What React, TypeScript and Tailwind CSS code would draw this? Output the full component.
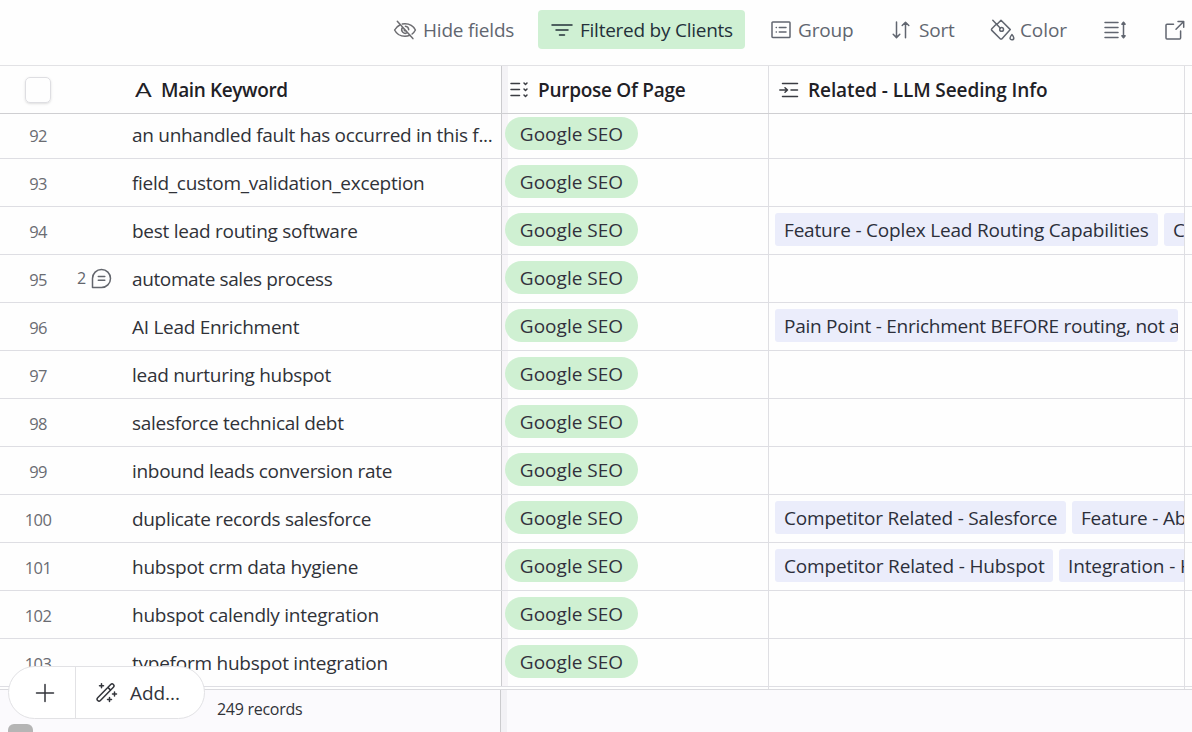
import * as React from 'react';
import { clsx } from 'clsx';

interface KeywordRow {
  id: number;
  keyword: string;
  tracking: string;
  comments?: number;
  related?: { label: string; className: string }[];
}

const rows: KeywordRow[] = [
  { id: 92, keyword: 'an unhandled fault has occurred in this f...', tracking: 'tracking-[-0.29px]' },
  { id: 93, keyword: 'field_custom_validation_exception', tracking: 'tracking-[-0.29px]' },
  {
    id: 94,
    keyword: 'best lead routing software',
    tracking: 'tracking-[-0.26px]',
    related: [
      { label: 'Feature - Coplex Lead Routing Capabilities', className: 'w-[383px] tracking-[-0.18px]' },
      { label: 'C', className: 'w-[27px]' },
    ],
  },
  { id: 95, keyword: 'automate sales process', tracking: 'tracking-[-0.38px]', comments: 2 },
  {
    id: 96,
    keyword: 'AI Lead Enrichment',
    tracking: 'tracking-[-0.28px]',
    related: [
      { label: 'Pain Point - Enrichment BEFORE routing, not a', className: 'w-[403px] tracking-[-0.25px]' },
    ],
  },
  { id: 97, keyword: 'lead nurturing hubspot', tracking: 'tracking-[-0.29px]' },
  { id: 98, keyword: 'salesforce technical debt', tracking: 'tracking-[-0.3px]' },
  { id: 99, keyword: 'inbound leads conversion rate', tracking: 'tracking-[-0.3px]' },
  {
    id: 100,
    keyword: 'duplicate records salesforce',
    tracking: 'tracking-[-0.33px]',
    related: [
      { label: 'Competitor Related - Salesforce', className: 'w-[291px] tracking-[-0.2px]' },
      { label: 'Feature - Ab', className: 'w-[130px] tracking-[-0.2px]' },
    ],
  },
  {
    id: 101,
    keyword: 'hubspot crm data hygiene',
    tracking: 'tracking-[-0.24px]',
    related: [
      { label: 'Competitor Related - Hubspot', className: 'w-[278px] tracking-[-0.15px]' },
      { label: 'Integration - H', className: 'w-[150px] tracking-[-0.12px]' },
    ],
  },
  { id: 102, keyword: 'hubspot calendly integration', tracking: 'tracking-[-0.24px]' },
  { id: 103, keyword: 'typeform hubspot integration', tracking: 'tracking-[-0.24px]' },
];

interface IconProps {
  width: number;
  height: number;
  className?: string;
  children: React.ReactNode;
}

function Icon({ width, height, className, children }: IconProps) {
  return (
    <svg
      width={width}
      height={height}
      viewBox={`0 0 ${width} ${height}`}
      fill="none"
      stroke="currentColor"
      strokeWidth="1.5"
      strokeLinecap="round"
      strokeLinejoin="round"
      className={clsx('shrink-0', className)}
      aria-hidden
    >
      {children}
    </svg>
  );
}

function Toolbar() {
  return (
    <div className="flex h-[66px] shrink-0 items-start border-b border-[#e2e2e5] pt-2.5 pl-[393px] text-[#616670]">
      <button type="button" className="flex h-10 w-[145px] items-center">
        <Icon width={24} height={20} className="mr-1.5 text-[#6c6c70]">
          <path d="M6.800 5C4.400 6.200 2.700 8 1.600 10c2 4 5.700 6.300 10.400 6.300 1.800 0 3.400-.4 4.900-1M9.300 3.900c.9-.1 1.800-.2 2.700-.2 4.700 0 8.400 2.300 10.400 6.300-.8 1.600-1.900 2.900-3.300 4" />
          <path d="M9.300 7.600a3.700 3.700 0 0 0 5.100 5.100M12.400 6.300a3.700 3.700 0 0 1 3.300 3.500M4.300 1.200l15.600 17.400" />
          <path d="M11.300 9.600a1 1 0 0 0 1.300 1.200" />
        </Icon>
        <span className="tracking-[-0.2px]">Hide fields</span>
      </button>
      <button type="button" className="flex h-[39px] w-[207px] items-center rounded-[4px] bg-[#cff0d3] pl-[13px] text-[#24303a]">
        <Icon width={22} height={16} className="mr-[7px]">
          <path d="M1 3h20M5 8h12M8.500 13h5" />
        </Icon>
        <span className="tracking-[-0.25px]">Filtered by Clients</span>
      </button>
      <button type="button" className="ml-[26px] flex h-10 w-[121px] items-center">
        <Icon width={20} height={18} className="mr-[7px]">
          <rect x="1" y="1" width="18" height="15.500" rx="0.8" />
          <path d="M8.300 6.500h6.700M8.300 11h6.700M5.200 6.500h.2M5.200 11h.2" />
        </Icon>
        <span className="tracking-[-0.15px]">Group</span>
      </button>
      <button type="button" className="flex h-10 w-[98px] items-center">
        <Icon width={18} height={18} className="mr-[9px]">
          <path d="M4.500 1v15.500M1.200 13.300l3.300 3.300 3.300-3.300M13.500 16.700V1.200M10.200 4.500l3.300-3.300 3.300 3.300" />
        </Icon>
        <span className="tracking-[-0.2px]">Sort</span>
      </button>
      <button type="button" className="flex h-10 w-[114px] items-center">
        <Icon width={25} height={22} className="mr-[5px]">
          <path d="M2.800 1.300l7.600 8M6.800 5.600 11 1.300 20.300 10.600 12 19.700a1.200 1.200 0 0 1-1.800 0L1.800 11.400a1.200 1.200 0 0 1 0-1.700l4.900-4.900" />
          <circle cx="11.600" cy="10.400" r="1.900" />
          <path d="M21.900 15.600c-1.200 1.500-1.900 2.400-1.900 3.300a1.900 1.900 0 0 0 3.800 0c0-.9-.6-1.800-1.900-3.300Z" />
        </Icon>
        <span className="tracking-[-0.1px]">Color</span>
      </button>
      <button type="button" className="flex h-10 w-[61px] items-center">
        <Icon width={23} height={18}>
          <path d="M1 1.500h13M1 6.500h13M1 11.500h13M1 16.500h13M19.500 2v14" />
          <path d="M17.900 3.200l1.600-2 1.600 2ZM17.900 14.800l1.600 2 1.600-2Z" fill="currentColor" />
        </Icon>
      </button>
      <button type="button" className="flex h-10 items-center">
        <Icon width={20} height={20}>
          <path d="M13 1.500h5.700v5.700M18.700 1.500 11 9.200M8.500 4.200H2a1 1 0 0 0-1 1V18a1 1 0 0 0 1 1h12.600a1 1 0 0 0 1-1v-7" />
        </Icon>
      </button>
    </div>
  );
}

function HeaderRow() {
  return (
    <div className="flex h-12 shrink-0 border-b border-[#cfcfd2] font-semibold text-[#1f2126]">
      <div className="flex w-[502px] items-center border-r border-[#cbcbce]">
        <span className="ml-[25px] size-[26px] rounded-[5px] border border-[#dedee2] shadow-sm" />
        <span className="ml-[84px] inline-block w-[26px] origin-left scale-x-130 font-[Lato] text-[19px] font-normal">A</span>
        <span className="tracking-[-0.37px]">Main Keyword</span>
      </div>
      <div className="w-1.5 bg-[#f4f3f6]" />
      <div className="flex w-[261px] items-center border-r border-[#dfdfe3] pl-0.5">
        <Icon width={20} height={18} className="mr-2 text-[#3a3c42]">
          <path d="M1 2.500h8.500M1 8.500h8.500M1 14.500h8.500M14 2l1.500 1.500L17 2M14 8l1.500 1.500L17 8M14 14l1.500 1.500L17 14" />
        </Icon>
        <span className="tracking-[-0.27px]">Purpose Of Page</span>
      </div>
      <div className="flex w-[416px] items-center border-r border-[#dfdfe3] pl-2.5">
        <Icon width={20} height={16} className="mr-[9px] text-[#3a3c42]">
          <path d="M3.500 1.500h15M12 8h6.500M3.500 14.500h15M.8 8h7.700M6 5.700 8.500 8 6 10.300" />
        </Icon>
        <span className="tracking-[-0.1px]">Related - LLM Seeding Info</span>
      </div>
    </div>
  );
}

function CommentCount({ count }: { count: number }) {
  return (
    <span className="-mt-0.5 flex items-center pl-px text-[16px] text-[#63666d]">
      {count}
      <Icon width={21} height={21} className="ml-[5px]">
        <path d="M1.500 19.500V10.500a9 9 0 1 1 9 9Z" />
        <path d="M7.300 8.500h6.500M7.300 12.200h6.500" />
      </Icon>
    </span>
  );
}

function GridRow({ row, first }: { row: KeywordRow; first: boolean }) {
  return (
    <div className={clsx('flex shrink-0 items-end overflow-hidden border-b border-[#dedee3]', first ? 'h-[45px]' : 'h-12')}>
      <div className="flex h-12 w-[502px] shrink-0 items-center border-r border-[#cbcbce] pt-0.5">
        <span className="w-[76px] shrink-0 pt-0.5 text-center text-[16.500px] tracking-[-0.6px] text-[#6a6c72]">{row.id}</span>
        <span className="w-14 shrink-0">{row.comments && <CommentCount count={row.comments} />}</span>
        <span className={clsx('whitespace-nowrap', row.tracking)}>{row.keyword}</span>
      </div>
      <div className="h-12 w-1.5 shrink-0 bg-[#f7f5f8]" />
      <div className="flex h-12 w-[261px] shrink-0 border-r border-[#dfdfe3] pt-[7px]">
        <span className="relative -ml-[3px] flex h-[33px] w-[133px] items-center justify-center rounded-full bg-[#cff0d2] text-[#32303c]">
          <span className="tracking-[0.02px]">Google SEO</span>
        </span>
      </div>
      <div className="flex h-12 w-[416px] shrink-0 gap-1.5 overflow-hidden border-r border-[#dfdfe3] pt-[7px] pl-1.5">
        {row.related?.map((item) => (
          <span
            key={item.label}
            className={clsx(
              'flex h-[33px] shrink-0 items-center overflow-hidden rounded-[3px] bg-[#ebedfb] pl-[9px] whitespace-nowrap text-[#2c2f3a]',
              item.className,
            )}
          >
            {item.label}
          </span>
        ))}
      </div>
    </div>
  );
}

function AddBar() {
  return (
    <div className="absolute top-[666px] left-2 flex h-[53px] w-[197px] rounded-full border border-[#e2e2e5] bg-white text-[#33353b]">
      <button type="button" className="flex w-[67px] items-center justify-center border-r border-[#e2e2e5] pl-1.5">
        <Icon width={20} height={20}>
          <path d="M10 1.500v17M1.500 10h17" />
        </Icon>
      </button>
      <button type="button" className="flex items-center pl-5">
        <Icon width={22} height={21} className="mr-3">
          <path d="M1.700 15.800 14.700 2.500a1.900 1.900 0 0 1 2.700 2.700L4.400 18.500a1.900 1.900 0 0 1-2.700-2.700ZM11.900 5.400l2.700 2.700M5.500 1.800v4M3.500 3.800h4M18.500 10v4M16.500 12h4M13.500 15.500v4M11.500 17.500h4" />
        </Icon>
        <span className="tracking-[-0.05px]">Add...</span>
      </button>
    </div>
  );
}

export default function App() {
  return (
    <div className="relative flex h-[732px] w-[1192px] flex-col overflow-hidden bg-[#fefefe] font-['Open_Sans',sans-serif] text-[19px] leading-6 text-[#303238]">
      <Toolbar />
      <HeaderRow />
      {rows.map((row, i) => (
        <GridRow key={row.id} row={row} first={i === 0} />
      ))}
      <div className="flex h-[3px] shrink-0 border-b border-[#dadade]">
        <div className="w-[769px] border-r border-[#dfdfe3]" />
        <div className="w-[416px] border-r border-[#dfdfe3]" />
      </div>
      <div className="flex min-h-0 flex-1 bg-[#fbfafd]">
        <div className="w-[501px] border-r border-[#cbcbce] pt-[7px] pl-[217px] text-[16px]">
          <span className="tracking-[-0.28px]">249 records</span>
        </div>
        <div className="w-1.5 bg-[#f2f1f5]" />
      </div>
      <AddBar />
      {/* Horizontal scrollbar thumb */}
      <div className="absolute top-[724px] left-2 h-4 w-[25px] rounded-[6px] bg-[#b5b5b5]" />
    </div>
  );
}
